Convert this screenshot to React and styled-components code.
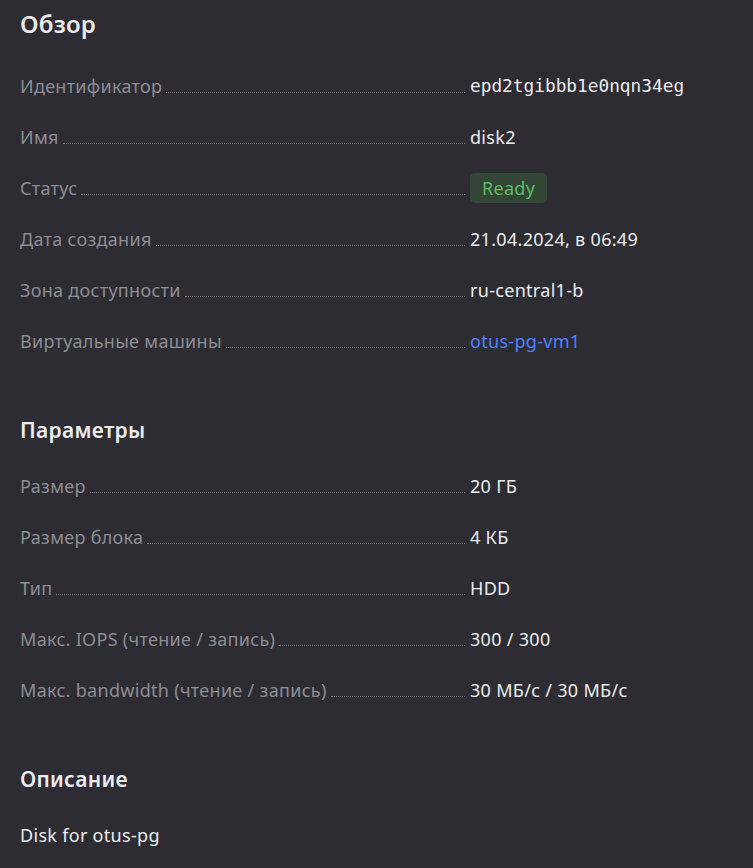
import React from 'react';
import styled, { createGlobalStyle } from 'styled-components';

const GlobalStyle = createGlobalStyle`
  body {
    margin: 0;
    background: #2d2c33;
    font-family: "Noto Sans", "Open Sans", sans-serif;
    color: #e9e9ec;
  }
`;

const Page = styled.div`
  padding: 10px 20px 30px;
`;

const Section = styled.section`
  & + & {
    margin-top: 52px;
  }
`;

const Title = styled.h2`
  margin: 0 0 ${(p) => (p.$main ? 22 : 18)}px;
  font-size: ${(p) => (p.$main ? 24 : 21)}px;
  line-height: ${(p) => (p.$main ? 28 : 24)}px;
  font-weight: 600;
  letter-spacing: ${(p) => (p.$main ? 0.2 : 0.3)}px;
  color: #ececef;
`;

const Row = styled.div`
  display: grid;
  grid-template-columns: 450px 1fr;
  align-items: center;
  height: 51px;
  font-size: 18px;
  line-height: 22px;
  letter-spacing: 0.3px;
`;

const Label = styled.div`
  display: flex;
  align-items: baseline;
  color: #8d8c93;
  padding-right: 5px;
`;

const Dots = styled.span`
  flex: 1;
  margin-left: 4px;
  border-bottom: 1px dotted #7b7a81;
`;

const Value = styled.div`
  color: #ececef;
  font-family: ${(p) => (p.$mono ? '"DejaVu Sans Mono", monospace' : 'inherit')};
  font-size: ${(p) => (p.$mono ? '17.8px' : '18px')};
  letter-spacing: ${(p) => (p.$mono ? 0 : 0.3)}px;
`;

const Link = styled.a`
  color: #4f80ff;
  text-decoration: none;
`;

const Badge = styled.span`
  display: inline-block;
  padding: 4px 12px;
  border-radius: 5px;
  background: #334535;
  color: #5dbd64;
`;

const Text = styled.p`
  margin: 0;
  font-size: 18px;
  line-height: 22px;
  letter-spacing: 0.3px;
  padding-top: 15px;
  color: #ececef;
`;

const Field = ({ label, children, mono }) => (
  <Row>
    <Label>
      {label}
      <Dots />
    </Label>
    <Value $mono={mono}>{children}</Value>
  </Row>
);

const App = () => (
  <>
    <GlobalStyle />
    <Page>
      <Section>
        <Title $main>Обзор</Title>
        <Field label="Идентификатор" mono>epd2tgibbb1e0nqn34eg</Field>
        <Field label="Имя">disk2</Field>
        <Field label="Статус">
          <Badge>Ready</Badge>
        </Field>
        <Field label="Дата создания">21.04.2024, в 06:49</Field>
        <Field label="Зона доступности">ru-central1-b</Field>
        <Field label="Виртуальные машины">
          <Link href="#">otus-pg-vm1</Link>
        </Field>
      </Section>
      <Section>
        <Title>Параметры</Title>
        <Field label="Размер">20 ГБ</Field>
        <Field label="Размер блока">4 КБ</Field>
        <Field label="Тип">HDD</Field>
        <Field label="Макс. IOPS (чтение / запись)">300 / 300</Field>
        <Field label="Макс. bandwidth (чтение / запись)">30 МБ/с / 30 МБ/с</Field>
      </Section>
      <Section>
        <Title>Описание</Title>
        <Text>Disk for otus-pg</Text>
      </Section>
    </Page>
  </>
);

export default App;
